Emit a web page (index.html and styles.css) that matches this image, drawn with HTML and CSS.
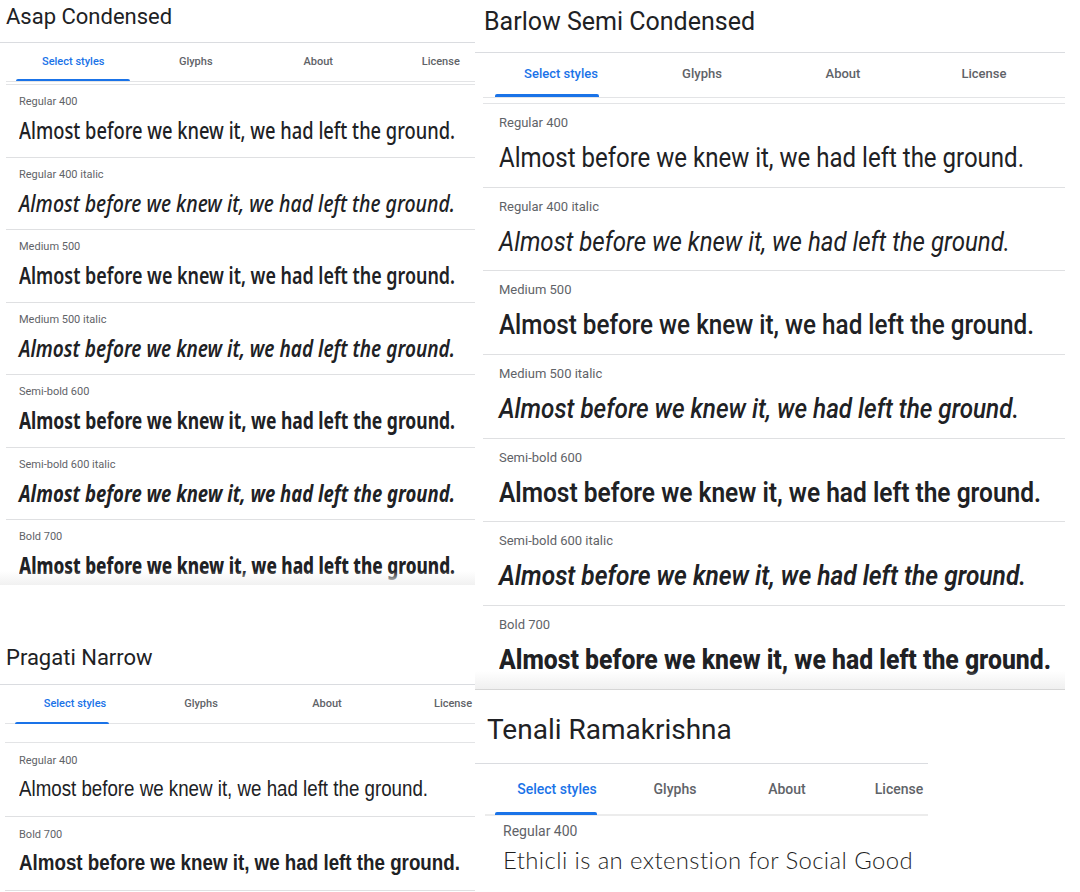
FILE: index.html
```html
<!DOCTYPE html>
<html lang="en">
<head>
<meta charset="utf-8">
<title>Font specimens</title>
<link rel="stylesheet" href="styles.css">
</head>
<body>
<div class="collage">
  <div class="col col-left">
    <section class="panel p-asap">
      <h2 class="title">Asap Condensed</h2>
      <nav class="tabs">
        <div class="tab active">Select styles</div>
        <div class="tab">Glyphs</div>
        <div class="tab">About</div>
        <div class="tab">License</div>
      </nav>
      <div class="rows">
        <div class="row"><div class="label">Regular 400</div><div class="sample w400" data-w="436">Almost before we knew it, we had left the ground.</div></div>
        <div class="row"><div class="label">Regular 400 italic</div><div class="sample w400 it" data-w="436">Almost before we knew it, we had left the ground.</div></div>
        <div class="row"><div class="label">Medium 500</div><div class="sample w500" data-w="436">Almost before we knew it, we had left the ground.</div></div>
        <div class="row"><div class="label">Medium 500 italic</div><div class="sample w500 it" data-w="436">Almost before we knew it, we had left the ground.</div></div>
        <div class="row"><div class="label">Semi-bold 600</div><div class="sample w600" data-w="436">Almost before we knew it, we had left the ground.</div></div>
        <div class="row"><div class="label">Semi-bold 600 italic</div><div class="sample w600 it" data-w="436">Almost before we knew it, we had left the ground.</div></div>
        <div class="row"><div class="label">Bold 700</div><div class="sample w700" data-w="436">Almost before we knew it, we had left the ground.</div></div>
      </div>
    </section>

    <section class="panel p-pragati">
      <h2 class="title">Pragati Narrow</h2>
      <nav class="tabs">
        <div class="tab active">Select styles</div>
        <div class="tab">Glyphs</div>
        <div class="tab">About</div>
        <div class="tab">License</div>
      </nav>
      <div class="rows">
        <div class="row"><div class="label">Regular 400</div><div class="sample w400" data-w="409">Almost before we knew it, we had left the ground.</div></div>
        <div class="row"><div class="label">Bold 700</div><div class="sample w700" data-w="441">Almost before we knew it, we had left the ground.</div></div>
      </div>
    </section>
  </div>

  <div class="col col-right">
    <section class="panel p-barlow">
      <h2 class="title">Barlow Semi Condensed</h2>
      <nav class="tabs">
        <div class="tab active">Select styles</div>
        <div class="tab">Glyphs</div>
        <div class="tab">About</div>
        <div class="tab">License</div>
      </nav>
      <div class="rows">
        <div class="row"><div class="label">Regular 400</div><div class="sample w400" data-w="525">Almost before we knew it, we had left the ground.</div></div>
        <div class="row"><div class="label">Regular 400 italic</div><div class="sample w400 it" data-w="511">Almost before we knew it, we had left the ground.</div></div>
        <div class="row"><div class="label">Medium 500</div><div class="sample w500" data-w="535">Almost before we knew it, we had left the ground.</div></div>
        <div class="row"><div class="label">Medium 500 italic</div><div class="sample w500 it" data-w="520">Almost before we knew it, we had left the ground.</div></div>
        <div class="row"><div class="label">Semi-bold 600</div><div class="sample w600" data-w="542">Almost before we knew it, we had left the ground.</div></div>
        <div class="row"><div class="label">Semi-bold 600 italic</div><div class="sample w600 it" data-w="527">Almost before we knew it, we had left the ground.</div></div>
        <div class="row"><div class="label">Bold 700</div><div class="sample w700" data-w="552">Almost before we knew it, we had left the ground.</div></div>
      </div>
    </section>

    <section class="panel p-tenali">
      <h2 class="title">Tenali Ramakrishna</h2>
      <nav class="tabs">
        <div class="tab active">Select styles</div>
        <div class="tab">Glyphs</div>
        <div class="tab">About</div>
        <div class="tab">License</div>
      </nav>
      <div class="rows">
        <div class="row"><div class="label">Regular 400</div><div class="sample w400" data-w="410">Ethicli is an extenstion for Social Good</div></div>
      </div>
    </section>
  </div>
</div>
<script src="script.js"></script>
</body>
</html>
```
FILE: styles.css
```css
* { box-sizing: border-box; }
html, body { margin: 0; padding: 0; background: #fff; }
body {
  font-family: Roboto, "Liberation Sans", sans-serif;
  color: #202124;
  width: 1080px;
  height: 892px;
  overflow: hidden;
}
.collage { display: flex; width: 1080px; height: 892px; }
.col { display: flex; flex-direction: column; }
.col-left { width: 475px; flex: none; }
.col-right { width: 590px; flex: none; }

.panel { position: relative; overflow: hidden; flex: none; }
.title { margin: 0; font-weight: 400; color: #202124; border-bottom: 1px solid #dadce0; white-space: nowrap; }
.tabs { display: flex; white-space: nowrap; }
.tab { position: relative; flex: none; text-align: center; font-weight: 500; color: #5f6368; }
.tab.active { color: #1a73e8; }
.tab.active::after { content: ""; position: absolute; bottom: 0; background: #1a73e8; border-radius: 2px 2px 0 0; }
.rows { border-top: 1px solid #e3e4e6; }
.row { border-bottom: 1px solid #dfe0e2; }
.label { color: #5f6368; white-space: nowrap; }
.sample {
  white-space: nowrap; color: #202124;
  width: max-content; transform-origin: 0 50%;
}
.w400 { font-weight: 400; }
.w500 { font-weight: 500; }
.w600 { font-weight: 600; }
.w700 { font-weight: 700; }
.it { font-style: italic; }

/* ---------- Asap Condensed ---------- */
.p-asap { height: 585px; width: 475px; }
.p-asap::after {
  content: ""; position: absolute; left: 0; right: 0; bottom: 0; height: 14px;
  background: linear-gradient(to bottom, rgba(255,255,255,0), #f1f1f1);
}
.p-asap .title { height: 43px; padding: 4px 0 0 6px; font-size: 22px; line-height: 26px; }
.p-asap .tabs { margin-left: 6px; padding-left: 6px; height: 39px; border-bottom: 1px solid #e3e4e6; }
.p-asap .tab { width: 122.5px; font-size: 11px; line-height: 37px; }
.p-asap .tab.active::after { left: 4px; right: 5px; height: 2px; bottom: 0; }
.p-asap .rows { margin: 2px 0 0 6px; }
.p-asap .row { padding: 10px 0 11.5px 13px; }
.p-asap .label { font-size: 11px; line-height: 14px; }
.p-asap .sample {
  margin-top: 6px; font-size: 23px; line-height: 30px;
  font-family: "Noto Sans", "Open Sans", sans-serif;
}
.p-asap .sample.w400 { font-weight: 500; }
.p-asap .sample.w500 { font-weight: 600; }
.p-asap .sample.w600 { font-weight: 700; }
.p-asap .sample.w700 { font-weight: 800; }

/* ---------- Pragati Narrow ---------- */
.p-pragati { margin-top: 57px; width: 475px; flex: 1; }
.p-pragati .title { height: 43px; padding: 3px 0 0 6px; font-size: 22px; line-height: 26px; }
.p-pragati .tabs { margin-left: 5px; padding-left: 7px; height: 39px; border-bottom: 1px solid #e3e4e6; }
.p-pragati .tab { width: 126px; font-size: 11px; line-height: 38px; }
.p-pragati .tab.active::after { left: 3px; width: 94px; height: 2px; bottom: -1px; }
.p-pragati .rows { margin: 18px 0 0 5px; }
.p-pragati .row { padding: 11px 0 12px 14px; }
.p-pragati .label { font-size: 11px; line-height: 14px; }
.p-pragati .sample {
  margin-top: 6px; font-size: 22.5px; line-height: 30px;
  font-family: "Liberation Sans", Arimo, sans-serif;
}

/* ---------- Barlow Semi Condensed ---------- */
.p-barlow { height: 690px; width: 590px; }
.p-barlow::after {
  content: ""; position: absolute; left: 0; right: 0; bottom: 0; height: 18px;
  background: linear-gradient(to bottom, rgba(255,255,255,0), #f0f0f0);
  border-bottom: 1px solid #d6d6d6;
}
.p-barlow .title { height: 53px; padding: 7px 0 0 9px; font-size: 25px; line-height: 30px; }
.p-barlow .tabs { margin-left: 8px; padding-left: 7.5px; height: 45px; border-bottom: 1px solid #e3e4e6; }
.p-barlow .tab { width: 141px; font-size: 13px; line-height: 42px; }
.p-barlow .tab.active::after { left: 4.5px; width: 104px; height: 3px; bottom: 0; }
.p-barlow .rows { margin: 5px 0 0 8px; }
.p-barlow .row { padding: 12px 0 11.7px 16px; }
.p-barlow .label { font-size: 13px; line-height: 14px; }
.p-barlow .sample {
  margin-top: 11px; font-size: 27px; line-height: 34px;
  font-family: Roboto, sans-serif;
}
.p-barlow .sample.w700 { font-weight: 800; }

/* ---------- Tenali Ramakrishna ---------- */
.p-tenali { width: 453px; flex: 1; }
.p-tenali .title { height: 74px; padding: 23px 0 0 12px; font-size: 28px; line-height: 34px; }
.p-tenali .tabs { margin-left: 10px; padding-left: 10px; height: 52px; border-bottom: 2px solid #ececec; }
.p-tenali .tab { font-size: 14px; line-height: 50px; }
.p-tenali .tab:nth-child(1) { width: 124px; }
.p-tenali .tab:nth-child(n+2) { width: 112px; }
.p-tenali .tab.active::after { left: 0; width: 102px; height: 3px; bottom: -1px; }
.p-tenali .rows { border-top: 0; margin-left: 10px; }
.p-tenali .row { border-bottom: 0; padding: 7px 0 0 18px; }
.p-tenali .label { font-size: 14px; line-height: 16px; }
.p-tenali .sample {
  margin-top: 4px; font-size: 24px; line-height: 34px;
  font-family: Lato, "Open Sans", sans-serif; font-weight: 300; letter-spacing: 0.4px;
  color: #1f1f1f;
}
```
FILE: script.js
```js
(function () {
  function fit() {
    var items = document.querySelectorAll('.sample[data-w]');
    for (var i = 0; i < items.length; i++) {
      var el = items[i];
      el.style.transform = 'none';
      var w = el.getBoundingClientRect().width;
      var target = parseFloat(el.getAttribute('data-w'));
      if (w > 0 && target > 0) {
        el.style.transform = 'scaleX(' + (target / w).toFixed(4) + ')';
      }
    }
  }
  fit();
  if (document.fonts && document.fonts.ready) {
    document.fonts.ready.then(fit);
  }
})();
```
